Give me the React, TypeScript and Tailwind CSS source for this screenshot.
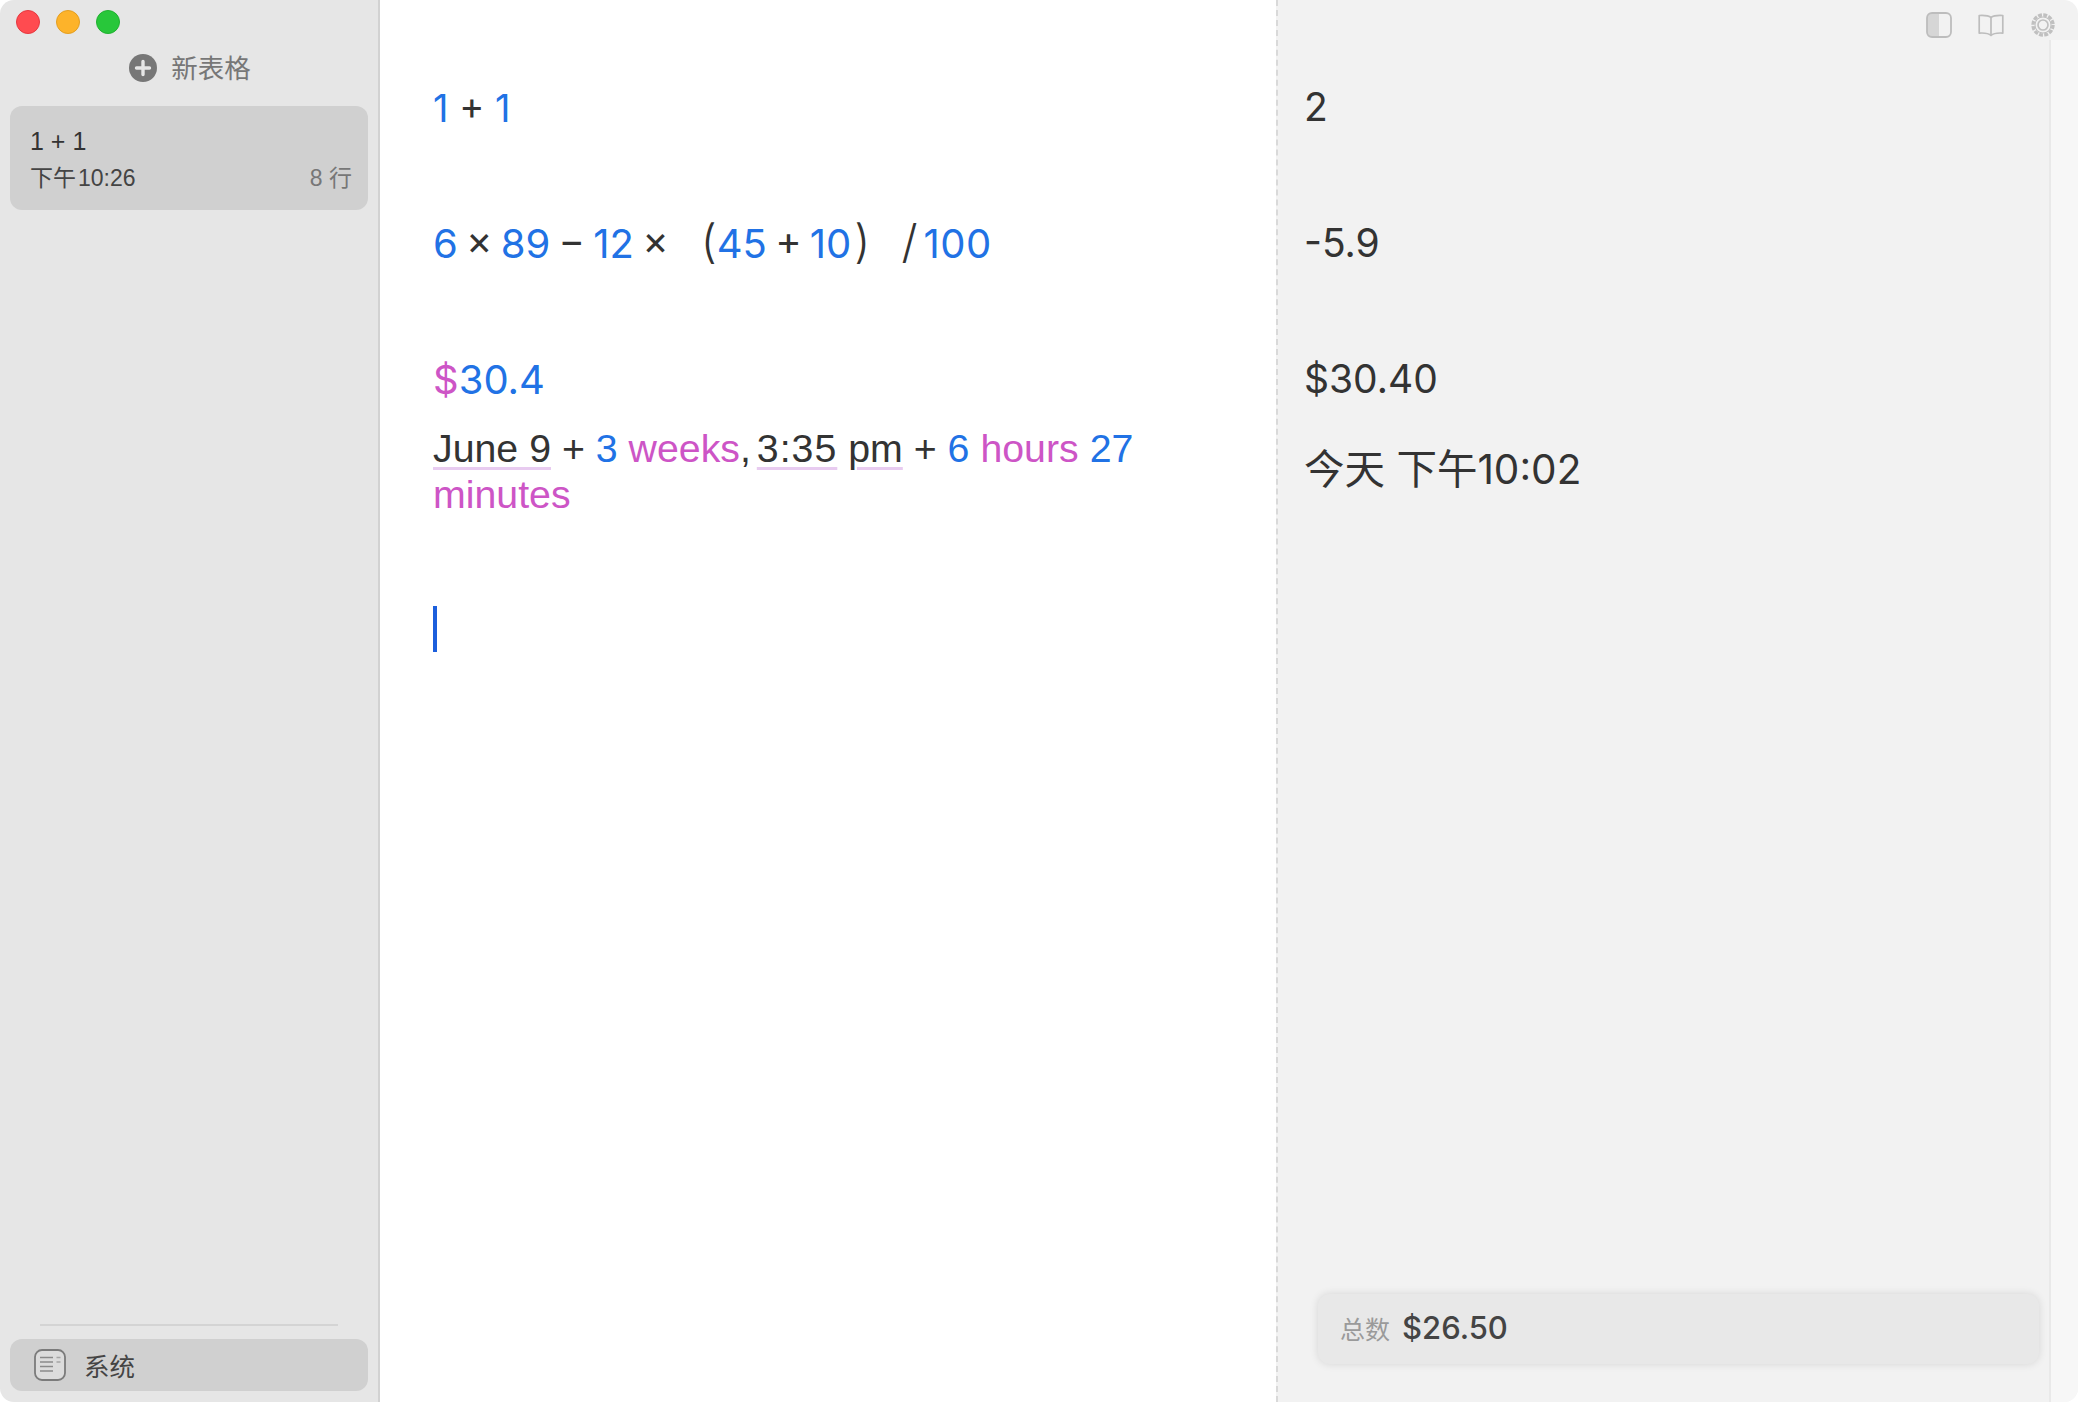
import React from 'react';

const blue = 'text-[#2172e5]';
const pink = 'text-[#cd55c6]';
const under = 'underline decoration-[#e8cbf0] decoration-[3px] underline-offset-[5px]';

const Traffic = () => (
  <div className="flex gap-4 pl-4 pt-2.5 h-[44px] shrink-0">
    <div className="w-6 h-6 rounded-full bg-[#ff4b50] border border-[#e5383f]"></div>
    <div className="w-6 h-6 rounded-full bg-[#fdb32a] border border-[#e39e20]"></div>
    <div className="w-6 h-6 rounded-full bg-[#28c73a] border border-[#20b030]"></div>
  </div>
);

const PlusIcon = () => (
  <svg width="28" height="28" viewBox="0 0 28 28">
    <circle cx="14" cy="14" r="14" fill="#777777" />
    <path d="M14 7.5v13M7.5 14h13" stroke="#e6e6e6" strokeWidth="3.4" strokeLinecap="round" />
  </svg>
);

const SheetIcon = () => (
  <svg width="32" height="32" viewBox="0 0 32 32" fill="none">
    <rect x="1" y="1" width="30" height="30" rx="7" fill="#dcdcdc" stroke="#7b7b7b" strokeWidth="1.8" />
    <path d="M6 8.5h13M6 13h13M6 17.5h13M6 22h13" stroke="#8a8a8a" strokeWidth="1.6" />
    <path d="M22.5 8.5h4M22.5 13h4" stroke="#a5a5a5" strokeWidth="1.6" />
  </svg>
);

const PanelIcon = () => (
  <svg width="26" height="26" viewBox="0 0 26 26" fill="none">
    <path d="M5 1h8v24H5a4 4 0 0 1-4-4V5a4 4 0 0 1 4-4Z" fill="#d6d6d6" />
    <rect x="1" y="1" width="24" height="24" rx="5" stroke="#bdbdbd" strokeWidth="1.8" />
  </svg>
);

const BookIcon = () => (
  <svg width="26" height="23" viewBox="0 0 26 23" fill="none" stroke="#bdbdbd" strokeWidth="1.7" strokeLinejoin="round">
    <path d="M13 3.5C10.5 1.6 6 1.2 1.2 1.5v17.6c4.8-.3 9.3 0 11.8 2.4 2.5-2.4 7-2.7 11.8-2.4V1.5C20 1.2 15.5 1.6 13 3.5Z" />
    <path d="M13 4v17" />
  </svg>
);

const GearIcon = () => (
  <svg width="26" height="26" viewBox="0 0 26 26" fill="none" stroke="#c0c0c0">
    <circle cx="13" cy="13" r="5" strokeWidth="1.7" />
    <circle cx="13" cy="13" r="10" strokeWidth="3.4" strokeDasharray="3.9 1.33" />
    <circle cx="13" cy="13" r="8" strokeWidth="1" />
  </svg>
);

const Row: React.FC<{ children?: React.ReactNode; className?: string }> = ({ children, className }) => (
  <div className={`min-h-[46px] leading-[46px] mb-[22px] ${className || ''}`}>{children}</div>
);

const Paren: React.FC<{ children: React.ReactNode; className?: string }> = ({ children, className }) => (
  <span className={`inline-block text-[46px] font-light leading-[30px] ${className || ''}`}>{children}</span>
);

export default function App() {
  return (
    <div className="h-[1402px] w-[2078px] bg-white overflow-hidden font-['Inter',sans-serif]">
      <div className="flex h-full rounded-[14px] overflow-hidden">
        {/* sidebar */}
        <div className="w-[380px] shrink-0 bg-[#e6e6e6] border-r-2 border-[#d2d2d2] flex flex-col">
          <Traffic />
          <div className="flex items-center justify-center gap-[14px] h-[48px] pl-[2px] text-[26.5px] text-[#777777] font-['Noto_Sans_CJK_SC',sans-serif]">
            <PlusIcon />
            <span className="relative -top-px">新表格</span>
          </div>
          <div className="mx-[10px] mt-[14px] h-[104px] rounded-xl bg-[#d0d0d0] pl-5 pr-4 pt-[19px]">
            <div className="text-[25px] leading-[32px] text-[#333333] font-['Liberation_Sans',sans-serif]">1 + 1</div>
            <div className="flex justify-between items-center mt-[6px] text-[23px] leading-[30px]">
              <span className="text-[#444444] font-['Liberation_Sans','Noto_Sans_CJK_SC',sans-serif]">下午<span className="ml-[2px]">10:26</span></span>
              <span className="text-[#777777] font-['Liberation_Sans','Noto_Sans_CJK_SC',sans-serif]">8 行</span>
            </div>
          </div>
          <div className="mt-auto mx-[40px] h-[2px] bg-[#d4d4d4]"></div>
          <div className="mx-[10px] mt-[13px] mb-[11px] h-[52px] rounded-xl bg-[#d0d0d0] flex items-center pl-6 gap-[18px]">
            <SheetIcon />
            <span className="text-[25.5px] text-[#444444] font-['Noto_Sans_CJK_SC',sans-serif]">系统</span>
          </div>
        </div>

        {/* editor */}
        <div className="flex-1 bg-white pt-[85px] pl-[53px] pr-[100px] text-[40px] text-[#333333]">
          <Row className="text-[38px]">
            <span className={blue}>1</span> + <span className={blue}>1</span>
          </Row>
          <Row />
          <Row className="[word-spacing:-3px]">
            <span className={blue}>6</span> × <span className={blue}>89</span> − <span className={blue}>12</span> ×
            <Paren className="ml-[32px]">(</Paren>
            <span className={blue}>45</span> + <span className={blue}>10</span>
            <Paren className="ml-[3px]">)</Paren>
            <Paren className="ml-[31px] mr-[6px]">/</Paren>
            <span className={`${blue} tracking-[0.5px]`}>100</span>
          </Row>
          <Row />
          <Row>
            <span className={pink}>$</span>
            <span className={blue}>30.4</span>
          </Row>
          <Row className="font-['Liberation_Sans',sans-serif] text-[39.3px]">
            <span className={under}>June 9</span> + <span className={blue}>3</span> <span className={pink}>weeks</span>,{' '}
            <span className={`${under} -ml-[5px] tracking-[1px]`}>3:35</span> <span className={under}>pm</span> + <span className={blue}>6</span>{' '}
            <span className={pink}>hours</span> <span className={blue}>27</span> <span className={pink}>minutes</span>
          </Row>
          <Row />
          <Row>
            <div className="w-[4px] h-[46px] bg-[#1c5fdc] -mt-px"></div>
          </Row>
        </div>

        {/* results */}
        <div className="w-[802px] shrink-0 bg-[#f2f2f2] border-l-2 border-dashed border-[#d9d9d9] flex flex-col">
          <div className="h-[40px] shrink-0 flex items-start justify-end gap-[26px] pt-[12px] pr-[22px]">
            <PanelIcon />
            <div className="pt-[2px]"><BookIcon /></div>
            <GearIcon />
          </div>
          <div className="flex-1 flex min-h-0">
            <div className="flex-1 border-r-2 border-[#e9e9e9] flex flex-col pl-[26px] pt-[44px] text-[39px] text-[#333333]">
              <Row>2</Row>
              <Row />
              <Row>-5.9</Row>
              <Row />
              <Row>$30.40</Row>
              <Row className="font-['Inter','Noto_Sans_CJK_SC',sans-serif] text-[40.5px] min-h-[92px] leading-[92px]">今天 下午10:02</Row>
              <div className="mt-auto mb-[38px] ml-[14px] mr-[10px] h-[70px] rounded-xl bg-[#e8e8e8] shadow-[0_0_8px_rgba(0,0,0,0.12)] flex items-center gap-[12px] pl-[22px]">
                <span className="text-[25px] text-[#9a9a9a] font-['Noto_Sans_CJK_SC',sans-serif]">总数</span>
                <span className="relative -top-px text-[31px] text-[#444444] font-medium">$26.50</span>
              </div>
            </div>
            <div className="w-[27px] shrink-0 bg-[#f7f7f7]"></div>
          </div>
        </div>
      </div>
    </div>
  );
}
